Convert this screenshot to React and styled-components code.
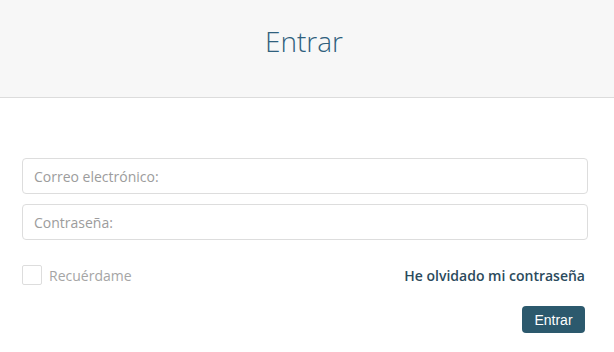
import React from 'react';
import styled, { createGlobalStyle } from 'styled-components';

const GlobalStyle = createGlobalStyle`
  body {
    margin: 0;
    background: #fff;
    font-family: 'Open Sans', sans-serif;
  }
`;

const Page = styled.div`
  width: 614px;
  height: 352px;
  overflow: hidden;
`;

const Header = styled.div`
  height: 97px;
  background: #f7f7f7;
  border-bottom: 1px solid #dcdcdc;
  display: flex;
  align-items: center;
  justify-content: center;
`;

const Title = styled.h1`
  margin: 0 6px 16px 0;
  font-family: 'Open Sans', sans-serif;
  font-weight: 300;
  font-size: 28px;
  color: #2f607d;
`;

const Form = styled.form`
  padding: 60px 26px 0 22px;
  display: flex;
  flex-direction: column;
`;

const Input = styled.input`
  box-sizing: border-box;
  height: 36px;
  width: 100%;
  margin-bottom: ${props => props.last ? '0' : '10px'};
  padding: 0 11px;
  border: 1px solid #dddddd;
  border-radius: 4px;
  font-family: 'Open Sans', sans-serif;
  font-size: 14px;
  color: #555;
  outline: none;

  &::placeholder {
    color: #9c9c9c;
  }
`;

const OptionsRow = styled.div`
  display: flex;
  justify-content: space-between;
  align-items: center;
  margin-top: 25px;
  padding-right: 3px;
`;

const Remember = styled.label`
  display: flex;
  align-items: center;
  gap: 7px;
  font-size: 14px;
  color: #a5a5a5;
`;

const Check = styled.span`
  box-sizing: border-box;
  width: 20px;
  height: 20px;
  border: 1px solid #dddddd;
  border-radius: 2px;
`;

const Forgot = styled.a`
  font-size: 14px;
  font-weight: 600;
  color: #2b4a5c;
  text-decoration: none;
`;

const Actions = styled.div`
  display: flex;
  justify-content: flex-end;
  margin-top: 21px;
  padding-right: 3px;
`;

const Button = styled.button`
  height: 27px;
  width: 63px;
  border: none;
  border-radius: 4px;
  background: #2c596d;
  color: #fff;
  font-family: 'Liberation Sans', Arial, sans-serif;
  font-size: 14px;
  padding: 0;
`;

function App() {
  return (
    <Page>
      <GlobalStyle />
      <Header>
        <Title>Entrar</Title>
      </Header>
      <Form onSubmit={e => e.preventDefault()}>
        <Input type="email" placeholder="Correo electrónico:" />
        <Input type="password" placeholder="Contraseña:" last />
        <OptionsRow>
          <Remember>
            <Check />
            Recuérdame
          </Remember>
          <Forgot href="#">He olvidado mi contraseña</Forgot>
        </OptionsRow>
        <Actions>
          <Button type="submit">Entrar</Button>
        </Actions>
      </Form>
    </Page>
  );
}

export default App;
